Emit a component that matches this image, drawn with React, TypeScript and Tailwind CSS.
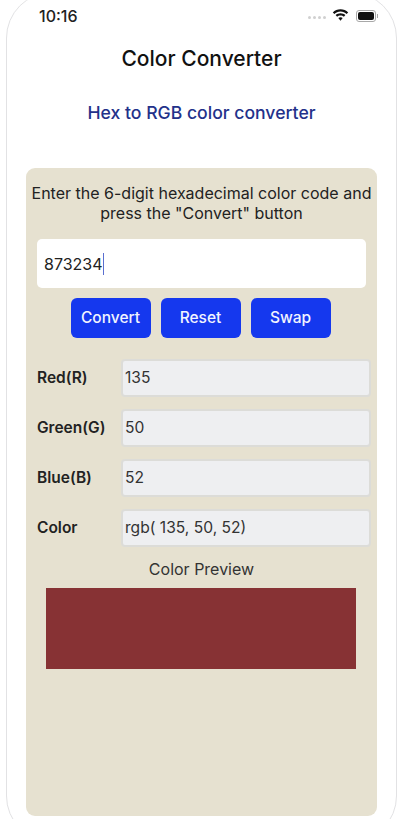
const font = { fontFamily: '"Inter", "Liberation Sans", sans-serif' };

const rows = [
  { label: 'Red(R)', value: '135' },
  { label: 'Green(G)', value: '50' },
  { label: 'Blue(B)', value: '52' },
  { label: 'Color', value: 'rgb( 135, 50, 52)' },
];

function StatusIcons() {
  return (
    <div className="flex items-center">
      <div className="flex gap-[2px] mr-[6px] mt-[4px]">
        <span className="w-[3px] h-[3px] rounded-full bg-[#d0d0d0]" />
        <span className="w-[3px] h-[3px] rounded-full bg-[#d0d0d0]" />
        <span className="w-[3px] h-[3px] rounded-full bg-[#d0d0d0]" />
        <span className="w-[3px] h-[3px] rounded-full bg-[#d0d0d0]" />
      </div>
      <svg width="17" height="13" viewBox="0 0 17 13" className="mr-[7px]">
        <path d="M8.5 2.6c2.4 0 4.5.9 6.1 2.4l1.6-1.6C14.200 1.400 11.500.3 8.500.3S2.800 1.400.8 3.400L2.400 5c1.600-1.500 3.700-2.400 6.100-2.400z" fill="#111" />
        <path d="M8.500 6.400c1.300 0 2.500.5 3.400 1.300l1.500-1.600C12.100 4.900 10.400 4.200 8.500 4.200s-3.600.7-4.900 1.900l1.500 1.600c.9-.8 2.100-1.300 3.400-1.300z" fill="#111" />
        <path d="M8.500 8.200c-.9 0-1.600.3-2.200.8l2.200 2.800 2.200-2.800c-.6-.5-1.300-.8-2.200-.8z" fill="#111" />
      </svg>
      <div className="w-[20px] h-[12px] rounded-[3px] border border-[#a8a8a8] p-[1px]">
        <div className="w-full h-full rounded-[2px] bg-[#111]" />
      </div>
      <span className="w-[1px] h-[4px] ml-[1px] bg-[#a8a8a8]" />
    </div>
  );
}

export default function App() {
  return (
    <div className="w-[400px] h-[819px] overflow-hidden bg-white" style={font}>
      {/* device frame */}
      <div className="ml-[6px] mt-[-8px] w-[391px] h-[850px] rounded-[46px] border border-[#e2e2e4] bg-white">
        <div className="flex items-center justify-between h-[31px] mt-[7px] pl-[32px] pr-[18px]">
          <span className="text-[16px] font-medium text-[#222]">10:16</span>
          <StatusIcons />
        </div>

        <h1 className="mt-[14px] text-center text-[21px] leading-[28px] font-medium text-[#111]">
          Color Converter
        </h1>
        <h2 className="mt-[28px] text-center text-[17.600px] leading-[24px] font-medium text-[#23318a]">
          Hex to RGB color converter
        </h2>

        <div className="mt-[43px] ml-[19px] w-[351px] h-[648px] rounded-[9px] bg-[#e6e1d0]">
          <p className="pt-[15px] text-center text-[16px] leading-[20px] text-[#222] whitespace-nowrap">
            Enter the 6-digit hexadecimal color code and
            <br />
            press the "Convert" button
          </p>

          <div className="flex items-center mt-[16px] ml-[11px] w-[329px] h-[49px] rounded-[5px] bg-white pl-[7px] text-[16px] text-[#222]">
            873234
            <span className="w-[1px] h-[22px] bg-[#5a6fd0]" />
          </div>

          <div className="flex justify-center gap-[10px] mt-[10px] pr-[2px]">
            <button className="w-[80px] h-[40px] rounded-[6px] bg-[#1538ee] text-[15.500px] font-medium text-[#f2f4ff]">Convert</button>
            <button className="w-[80px] h-[40px] rounded-[6px] bg-[#1538ee] text-[15.500px] font-medium text-[#f2f4ff]">Reset</button>
            <button className="w-[80px] h-[40px] rounded-[6px] bg-[#1538ee] text-[15.500px] font-medium text-[#f2f4ff]">Swap</button>
          </div>

          <div className="flex flex-col gap-[12px] mt-[21px] pl-[11px] pr-[6px]">
            {rows.map((row) => (
              <div key={row.label} className="flex items-center">
                <span className="w-[84px] shrink-0 text-[15.500px] font-semibold text-[#222]">{row.label}</span>
                <div className="flex items-center flex-1 h-[38px] rounded-[4px] border-2 border-[#dcdcd8] bg-[#eeeff1] pl-[2px] text-[15.600px] text-[#333]">
                  {row.value}
                </div>
              </div>
            ))}
          </div>

          <p className="mt-[11px] text-center text-[16px] leading-[22px] text-[#333]">Color Preview</p>
          <div className="mt-[8px] ml-[20px] w-[310px] h-[81px] bg-[#873234]" />
        </div>
      </div>
    </div>
  );
}
